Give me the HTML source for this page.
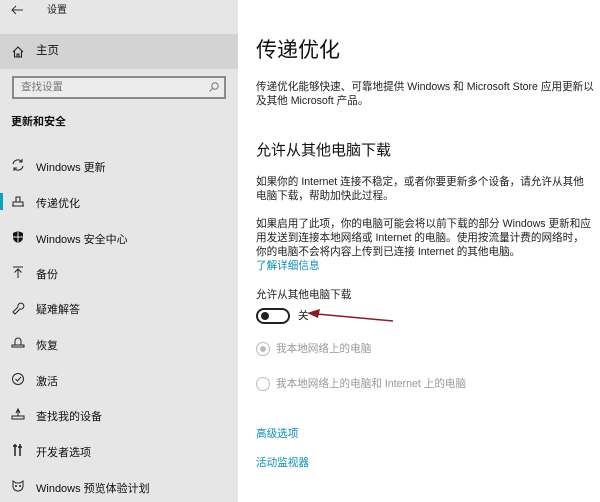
<!DOCTYPE html>
<html><head><meta charset="utf-8"><style>
*{margin:0;padding:0;box-sizing:border-box}
body{width:600px;height:502px;overflow:hidden;background:#fff;font-family:"Liberation Sans","Noto Sans CJK SC",sans-serif;color:#111;position:relative}
.side{position:absolute;left:0;top:0;width:238px;height:502px;background:#e6e6e6}
.a{position:absolute;white-space:nowrap;line-height:1}
.item{position:absolute;left:0;width:238px;height:20px;font-size:11px}
.item .ic{position:absolute;left:10px;top:2px;width:16px;height:16px}
.item .t{position:absolute;left:36px;top:4px;white-space:nowrap}
.p{font-size:10.6px;color:#222}
.link{color:#0a8fb0;font-size:10.6px}
.grey{color:#999}
</style></head><body>
<div class="side">
 <svg class="a" style="left:10px;top:4px" width="14" height="12" viewBox="0 0 14 12"><path d="M13 6H2M6 2L2 6l4 4" fill="none" stroke="#333" stroke-width="1"/></svg>
 <div class="a" style="left:47px;top:6px;font-size:10px;color:#222">设置</div>
 <div class="a" style="left:0;top:34px;width:238px;height:35px;background:#d3d3d3"></div>
 <svg class="a" style="left:11px;top:45px" width="14" height="14" viewBox="0 0 14 14"><path d="M2 7L7 2l5 5M3.5 6v6h7V6M6 12V9h2v3" fill="none" stroke="#222" stroke-width="1.1"/></svg>
 <div class="a" style="left:36px;top:46px;font-size:11.5px">主页</div>
 <div class="a" style="left:12px;top:76px;width:214px;height:23px;border:2px solid #8a8a8a;background:#ececec"></div>
 <div class="a" style="left:21px;top:82px;font-size:10.5px;color:#777">查找设置</div>
 <svg class="a" style="left:208px;top:81px" width="12" height="12" viewBox="0 0 12 12"><circle cx="7" cy="5" r="3.2" fill="none" stroke="#777"/><path d="M4.7 7.3L1.5 10.5" stroke="#777"/></svg>
 <div class="a" style="left:11px;top:117px;font-size:11px;font-weight:bold">更新和安全</div>

 <div class="item" style="top:155px"><svg class="ic" viewBox="0 0 16 16"><path d="M3 7a5 5 0 0 1 9-2M13 9a5 5 0 0 1-9 2M12 2v3H9M4 14v-3h3" fill="none" stroke="#222"/></svg><span class="t">Windows 更新</span></div>
 <div class="a" style="left:0;top:193px;width:3px;height:17px;background:#0aa3c2"></div>
 <div class="item" style="top:191px"><svg class="ic" viewBox="0 0 16 16"><path d="M2 13h12M3 13V9h10v4M6 9V4h4v5" fill="none" stroke="#222"/></svg><span class="t">传递优化</span></div>
 <div class="item" style="top:227px"><svg class="ic" viewBox="0 0 16 16"><path d="M8 2l5 2v4c0 3-2 5-5 6-3-1-5-3-5-6V4z" fill="#111"/><path d="M8 2v12M3 8h10" stroke="#e6e6e6"/></svg><span class="t">Windows 安全中心</span></div>
 <div class="item" style="top:262px"><svg class="ic" viewBox="0 0 16 16"><path d="M3 3h10M8 14V5M4.5 8.5L8 5l3.5 3.5" fill="none" stroke="#222"/></svg><span class="t">备份</span></div>
 <div class="item" style="top:297px"><svg class="ic" viewBox="0 0 16 16"><path d="M3 13l5-5a3 3 0 1 1 2 2l-5 5z" fill="none" stroke="#222"/></svg><span class="t">疑难解答</span></div>
 <div class="item" style="top:333px"><svg class="ic" viewBox="0 0 16 16"><path d="M2 12h12v-2H2zM5 10V6a3 3 0 0 1 6 0v4" fill="none" stroke="#222"/></svg><span class="t">恢复</span></div>
 <div class="item" style="top:369px"><svg class="ic" viewBox="0 0 16 16"><circle cx="8" cy="8" r="5.5" fill="none" stroke="#222"/><path d="M5.5 8l2 2 3.5-4" fill="none" stroke="#222"/></svg><span class="t">激活</span></div>
 <div class="item" style="top:404px"><svg class="ic" viewBox="0 0 16 16"><path d="M2 13h12v-3H2zM8 10V4M6 7l2-4 2 4" fill="none" stroke="#222"/></svg><span class="t">查找我的设备</span></div>
 <div class="item" style="top:440px"><svg class="ic" viewBox="0 0 16 16"><path d="M5 2v12M10 2v12M3 4h4M8 5h4" fill="none" stroke="#222" stroke-width="1.5"/></svg><span class="t">开发者选项</span></div>
 <div class="item" style="top:476px"><svg class="ic" viewBox="0 0 16 16"><path d="M3 3l3 2h4l3-2v5c0 3-2 5-5 5s-5-2-5-5z" fill="none" stroke="#222"/><circle cx="6" cy="8" r="1" fill="#222"/><circle cx="10" cy="8" r="1" fill="#222"/></svg><span class="t">Windows 预览体验计划</span></div>
</div>

<div class="a" style="left:256px;top:40px;font-size:21px">传递优化</div>
<div class="a p" style="left:256px;top:82px">传递优化能够快速、可靠地提供 Windows 和 Microsoft Store 应用更新以</div>
<div class="a p" style="left:256px;top:96px">及其他 Microsoft 产品。</div>
<div class="a" style="left:256px;top:143px;font-size:15px">允许从其他电脑下载</div>
<div class="a p" style="left:256px;top:177px">如果你的 Internet 连接不稳定，或者你要更新多个设备，请允许从其他</div>
<div class="a p" style="left:256px;top:191px">电脑下载，帮助加快此过程。</div>
<div class="a p" style="left:256px;top:219px">如果启用了此项，你的电脑可能会将以前下载的部分 Windows 更新和应</div>
<div class="a p" style="left:256px;top:233px">用发送到连接本地网络或 Internet 的电脑。使用按流量计费的网络时，</div>
<div class="a p" style="left:256px;top:247px">你的电脑不会将内容上传到已连接 Internet 的其他电脑。</div>
<div class="a link" style="left:256px;top:261px">了解详细信息</div>
<div class="a p" style="left:256px;top:290px">允许从其他电脑下载</div>
<div class="a" style="left:256px;top:308px;width:34px;height:16px;border:2px solid #222;border-radius:8px"></div>
<div class="a" style="left:261px;top:312px;width:8px;height:8px;border-radius:50%;background:#222"></div>
<div class="a p" style="left:298px;top:311px">关</div>
<svg class="a" style="left:305px;top:306px" width="92" height="20" viewBox="0 0 92 20"><path d="M88 15L12 8" stroke="#8a1c2a" stroke-width="1.5"/><path d="M2 7l13-4-2 9z" fill="#8a1c2a"/></svg>
<div class="a" style="left:256px;top:342px;width:14px;height:14px;border:1.5px solid #bbb;border-radius:50%"></div>
<div class="a" style="left:260px;top:346px;width:6px;height:6px;border-radius:50%;background:#bbb"></div>
<div class="a p grey" style="left:276px;top:344px">我本地网络上的电脑</div>
<div class="a" style="left:256px;top:377px;width:14px;height:14px;border:1.5px solid #bbb;border-radius:50%"></div>
<div class="a p grey" style="left:276px;top:379px">我本地网络上的电脑和 Internet 上的电脑</div>
<div class="a link" style="left:256px;top:429px">高级选项</div>
<div class="a link" style="left:256px;top:458px">活动监视器</div>
</body></html>
